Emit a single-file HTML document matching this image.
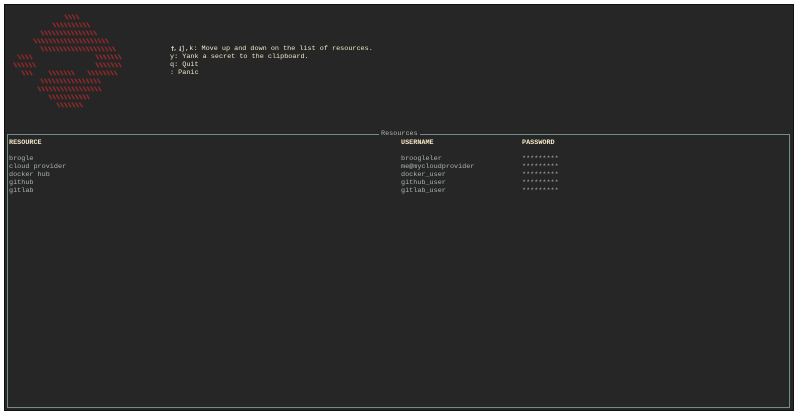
<!DOCTYPE html>
<html><head><style>
html,body{margin:0;padding:0;width:800px;height:420px;background:#fff;overflow:hidden}
#scr{position:absolute;left:4px;top:4px;width:790px;height:407px;background:#262626;border:1px solid #111;box-sizing:border-box}
.t{position:absolute;font-family:"Liberation Mono","DejaVu Sans Mono",monospace;font-size:6.8px;line-height:8px;white-space:pre;color:#c8c8c8}
.r{color:#8e2a2a;font-weight:bold;letter-spacing:-0.3px;text-shadow:0.6px 0 0 #8e2a2a,0 0.5px 0 #8e2a2a}
.h{color:#f0e6c8}
.y{color:#f2e8c8;font-weight:bold}
#panel{position:absolute;left:7px;top:134px;width:783px;height:274px;border:1px solid #6f8f86;box-sizing:border-box}
.g{color:#a9b5ae}
.ar{font-family:"DejaVu Sans",sans-serif;font-weight:bold;font-size:6.5px;line-height:8px;display:inline-block;width:3.5px;overflow:hidden;vertical-align:top}
</style></head><body>
<div id="scr"></div>
<div id="panel"></div>
<div class="t r" style="left:64px;top:14px">\\\\</div>
<div class="t r" style="left:52px;top:22px">\\\\\\\\\\</div>
<div class="t r" style="left:40px;top:30px">\\\\\\\\\\\\\\\</div>
<div class="t r" style="left:33px;top:38px">\\\\\\\\\\\\\\\\\\\\</div>
<div class="t r" style="left:40px;top:46px">\\\\\\\\\\\\\\\\\\\\</div>
<div class="t r" style="left:17px;top:54px">\\\\</div>
<div class="t r" style="left:95px;top:54px">\\\\\\\</div>
<div class="t r" style="left:13px;top:62px">\\\\\\</div>
<div class="t r" style="left:95px;top:62px">\\\\\\\</div>
<div class="t r" style="left:21px;top:70px">\\\</div>
<div class="t r" style="left:48px;top:70px">\\\\\\\</div>
<div class="t r" style="left:87px;top:70px">\\\\\\\\</div>
<div class="t r" style="left:40px;top:78px">\\\\\\\\\\\\\\\\</div>
<div class="t r" style="left:37px;top:86px">\\\\\\\\\\\\\\\\\</div>
<div class="t r" style="left:48px;top:94px">\\\\\\\\\\\</div>
<div class="t r" style="left:56px;top:102px">\\\\\\\</div>
<div class="t h" style="left:170px;top:45px"><span class="ar">↑</span>,<span class="ar">↓</span>j,k: Move up and down on the list of resources.
y: Yank a secret to the clipboard.
q: Quit
: Panic</div>
<div class="t g" style="left:379px;top:130px;background:#262626;padding:0 2px">Resources</div>
<div class="t y" style="left:9px;top:139px">RESOURCE</div>
<div class="t y" style="left:401px;top:139px">USERNAME</div>
<div class="t y" style="left:522px;top:139px">PASSWORD</div>
<div class="t g" style="left:9px;top:155px">brogle
cloud provider
docker hub
github
gitlab</div>
<div class="t g" style="left:401px;top:155px">broogleler
me@mycloudprovider
docker_user
github_user
gitlab_user</div>
<div class="t g" style="left:522px;top:155px">*********
*********
*********
*********
*********</div>
</body></html>
